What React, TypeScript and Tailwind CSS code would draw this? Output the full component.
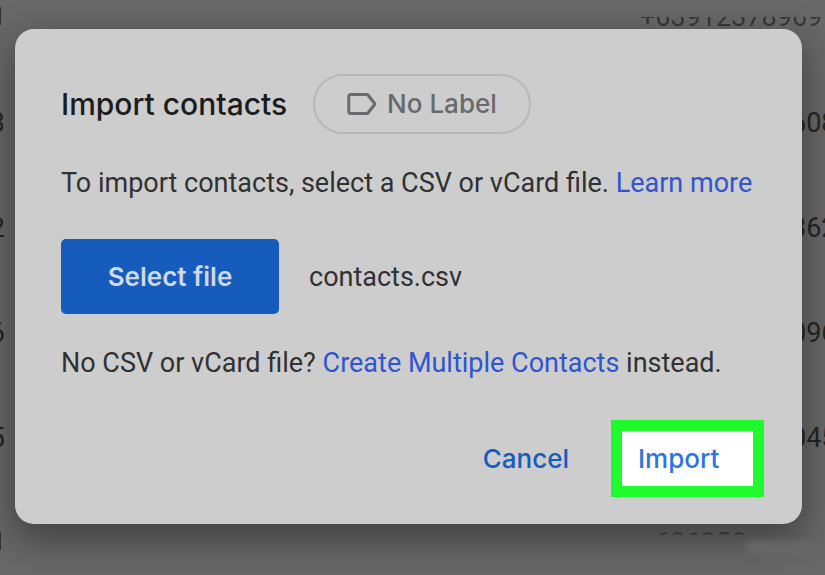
import React from 'react';

const rows = [
    { left: '3', right: '608' },
    { left: '2', right: '362' },
    { left: '6', right: '096' },
    { left: '5', right: '045' },
];

const ContactList: React.FC = () => (
    <div
        aria-hidden="true"
        className="absolute inset-0 overflow-hidden bg-[#686868] font-[Roboto,sans-serif] text-[27px] leading-9 text-[#252525]"
    >
        {/* Row cut off at the top */}
        <div className="flex h-[70px] items-start justify-between pt-[7px]">
            <span className="h-[18px] w-px bg-[#333333]" />
            <span className="mt-[10px] flex h-[9px] w-[185px] items-end overflow-hidden opacity-70">
                <span className="-mb-[9px] whitespace-nowrap">+63912378969</span>
            </span>
        </div>

        <ul>
            {rows.map((row) => (
                <li key={row.left} className="flex h-[105px] items-center justify-between">
                    <span className="flex w-[5px] justify-end">{row.left}</span>
                    <span className="w-[34px] whitespace-nowrap">{row.right}</span>
                </li>
            ))}
        </ul>

        {/* Row cut off at the bottom */}
        <div className="flex items-start justify-between pt-[42px]">
            <span className="h-[18px] w-px bg-[#333333]" />
            <span className="flex h-[3px] w-[185px] items-start overflow-hidden opacity-50">
                <span className="-mt-[7px] whitespace-nowrap">+636358</span>
            </span>
        </div>
    </div>
);

const LabelIcon: React.FC = () => (
    <svg className="h-6 w-[30px]" viewBox="0 0 30 24" fill="none" aria-hidden="true">
        <path
            d="M3.8 2.5H20.5L28 12L20.5 21.5H3.8Q1.8 21.5 1.8 19.5V4.5Q1.8 2.5 3.8 2.5Z"
            stroke="#686a6d"
            strokeWidth={3}
            strokeLinejoin="round"
        />
    </svg>
);

const ImportDialog: React.FC = () => (
    <div
        role="dialog"
        aria-labelledby="import-title"
        className="relative rounded-[19px] bg-[#cdcdcd] pt-[45px] pr-[38px] pb-[27px] pl-[46px] font-[Roboto,sans-serif] text-[27px] leading-9 text-[#303133] shadow-[0_14px_36px_4px_rgba(0,0,0,0.35)]"
    >
        {/* Header */}
        <div className="flex items-center gap-[26px]">
            <h1 id="import-title" className="font-[Inter,sans-serif] text-[30px] font-medium text-[#1b1c1e]">
                Import contacts
            </h1>
            <button className="flex h-[60px] items-center gap-[10px] rounded-full border-2 border-[#b7b8b9] px-8 font-[Inter,sans-serif] text-[26px] font-medium text-[#686a6d]">
                <LabelIcon />
                No Label
            </button>
        </div>

        {/* Content */}
        <p className="mt-[31px] whitespace-nowrap">
            To import contacts, select a CSV or vCard file.{' '}
            <a href="#learn" className="text-[#2f55cf]">
                Learn more
            </a>
        </p>
        <div className="mt-[38px] flex items-center gap-[30px]">
            <button className="h-[75px] w-[218px] rounded-[5px] bg-[#155cbc] font-[Inter,sans-serif] text-[26px] font-semibold text-[#cfd8e6]">
                Select file
            </button>
            <span>contacts.csv</span>
        </div>
        <p className="mt-[31px] whitespace-nowrap">
            No CSV or vCard file?{' '}
            <a href="#create" className="text-[#2f55cf]">
                Create Multiple Contacts
            </a>{' '}
            instead.
        </p>

        {/* Footer */}
        <div className="mt-[39px] flex items-center justify-end gap-[42px] font-[Inter,sans-serif] text-[26px] font-medium">
            <button className="text-[#155cbc]">Cancel</button>
            <button className="h-[77px] w-[153px] border-[11px] border-[#20fa2c] bg-white pl-4 text-left text-[#2b74e2]">
                Import
            </button>
        </div>
    </div>
);

export default function App() {
    return (
        <main className="relative min-h-screen overflow-hidden pt-[29px] pr-[23px] pb-[51px] pl-[15px]">
            <ContactList />
            <ImportDialog />
            <div className="absolute right-0 bottom-[18px] h-4 w-20 rounded-full bg-[#666666] blur-[3px]" />
        </main>
    );
}
